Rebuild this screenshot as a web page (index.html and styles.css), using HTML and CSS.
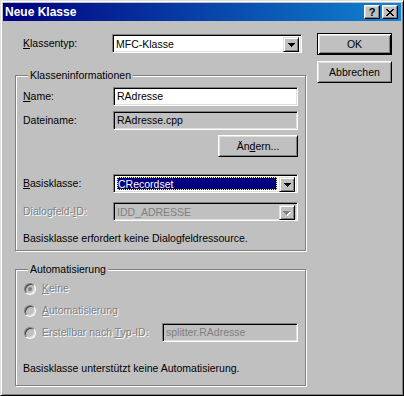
FILE: index.html
```html
<!DOCTYPE html>
<html lang="de">
<head>
  <meta charset="UTF-8" />
  <title>Neue Klasse</title>
  <link rel="stylesheet" href="styles.css">
</head>
<body>
  <div class="window">
    <div class="titlebar">
      <span class="title">Neue Klasse</span>
      <div class="title-buttons">
        <span class="tbtn help">?</span>
        <span class="tbtn close">
          <svg width="8" height="7" viewBox="0 0 8 7" shape-rendering="crispEdges"><path d="M0 0h2v1h1v1h2v-1h1v-1h2v1h-1v1h-1v1h-1v1h1v1h1v1h1v1h-2v-1h-1v-1h-2v1h-1v1h-2v-1h1v-1h1v-1h1v-1h-1v-1h-1v-1h-1z" fill="#000"/></svg>
        </span>
      </div>
    </div>

    <div class="dialog">
      <div class="main">
        <div class="row top-row">
          <label class="lbl"><u>K</u>lassentyp:</label>
          <div class="combo wide">
            <span class="combo-text">MFC-Klasse</span>
            <span class="drop"><svg width="7" height="4" viewBox="0 0 7 4" shape-rendering="crispEdges"><path d="M0 0h7v1h-1v1h-1v1h-1v1h-1v-1h-1v-1h-1v-1h-1z" fill="#000"/></svg></span>
          </div>
        </div>

        <div class="group info">
          <span class="legend">Klasseninformationen</span>

          <div class="row name-row">
            <label class="lbl"><u>N</u>ame:</label>
            <div class="edit">RAdresse</div>
          </div>

          <div class="row file-row">
            <label class="lbl">Dateiname:</label>
            <div class="edit readonly">RAdresse.cpp</div>
          </div>

          <button class="btn change">Än<u>d</u>ern...</button>

          <div class="row base-row">
            <label class="lbl"><u>B</u>asisklasse:</label>
            <div class="combo">
              <span class="combo-text"><span class="selected">CRecordset</span></span>
              <span class="drop"><svg width="7" height="4" viewBox="0 0 7 4" shape-rendering="crispEdges"><path d="M0 0h7v1h-1v1h-1v1h-1v1h-1v-1h-1v-1h-1v-1h-1z" fill="#000"/></svg></span>
            </div>
          </div>

          <div class="row dlg-row">
            <label class="lbl disabled">Dialogfeld-<u>I</u>D:</label>
            <div class="combo off">
              <span class="combo-text">IDD_ADRESSE</span>
              <span class="drop"><svg width="8" height="5" viewBox="0 0 8 5" shape-rendering="crispEdges"><path d="M1 1h7v1h-1v1h-1v1h-1v1h-1v-1h-1v-1h-1v-1h-1z" fill="#fff"/><path d="M0 0h7v1h-1v1h-1v1h-1v1h-1v-1h-1v-1h-1v-1h-1z" fill="#808080"/></svg></span>
            </div>
          </div>

          <p class="note base-note">Basisklasse erfordert keine Dialogfeldressource.</p>
        </div>

        <div class="group auto">
          <span class="legend">Automatisierung</span>

          <div class="radio-row first">
            <span class="radio checked"></span>
            <span class="disabled"><u>K</u>eine</span>
          </div>
          <div class="radio-row second">
            <span class="radio"></span>
            <span class="disabled"><u>A</u>utomatisierung</span>
          </div>
          <div class="radio-row third">
            <span class="radio"></span>
            <span class="disabled">Erstellbar nach <u>T</u>yp-ID:</span>
            <div class="edit readonly off typeid">splitter.RAdresse</div>
          </div>

          <p class="note auto-note">Basisklasse unterstützt keine Automatisierung.</p>
        </div>
      </div>

      <div class="side">
        <button class="btn default">OK</button>
        <button class="btn">Abbrechen</button>
      </div>
    </div>
  </div>
</body>
</html>
```

FILE: styles.css
```css
* {
  box-sizing: border-box;
}
body {
  margin: 0;
  background: #c0c0c0;
  font-family: "Liberation Sans", Arial, sans-serif;
  font-size: 10.5px;
  line-height: 13px;
  color: #000;
}
u {
  text-underline-offset: 1px;
}
.window {
  width: 404px;
  height: 396px;
  padding: 2px;
  background: #c0c0c0;
  border: 1px solid;
  border-color: #dfdfdf #000 #000 #dfdfdf;
  box-shadow: inset 1px 1px #fff, inset -1px -1px #808080;
  display: flex;
  flex-direction: column;
}
.titlebar {
  height: 18px;
  padding: 0 3px 0 2px;
  display: flex;
  align-items: center;
  background: linear-gradient(to right, #000080, #1084d0);
  color: #fff;
}
.title {
  flex: 1;
  font-weight: bold;
  font-size: 12px;
}
.title-buttons {
  display: flex;
  gap: 2px;
}
.tbtn {
  width: 16px;
  height: 14px;
  display: flex;
  align-items: center;
  justify-content: center;
  background: #c0c0c0;
  color: #000;
  border: 1px solid;
  border-color: #fff #000 #000 #fff;
  box-shadow: inset -1px -1px #808080, inset 1px 1px #dfdfdf;
}
.help {
  font-weight: bold;
  font-size: 11px;
  line-height: 11px;
}

.dialog {
  flex: 1;
  display: flex;
  padding: 13px 0 0 12px;
}
.main {
  width: 291px;
  display: flex;
  flex-direction: column;
}
.side {
  margin: -1px 0 0 11px;
  display: flex;
  flex-direction: column;
  gap: 6px;
}

.row {
  display: flex;
  align-items: center;
}
.lbl {
  width: 90px;
  flex-shrink: 0;
}
.top-row {
  padding-left: 8px;
}
.top-row .lbl {
  width: 89px;
}

/* sunken fields */
.edit, .combo {
  height: 19px;
  background: #fff;
  border: 1px solid;
  border-color: #808080 #fff #fff #808080;
  box-shadow: inset 1px 1px #000, inset -1px -1px #dfdfdf;
}
.edit {
  width: 185px;
  padding: 2px 3px;
  white-space: nowrap;
}
.edit.readonly {
  background: #c0c0c0;
}
.edit.off {
  color: #808080;
}
.combo {
  width: 185px;
  display: flex;
  padding: 2px;
}
.combo.wide {
  width: 190px;
}
.combo.off {
  background: #c0c0c0;
  color: #808080;
}
.combo-text {
  flex: 1;
  padding: 1px 1px 0;
  display: flex;
}
.selected {
  flex: 1;
  margin: -1px 1px 0 0;
  padding: 1px 1px 0;
  background: #000080;
  color: #fff;
  outline: 1px dotted #ffff80;
  outline-offset: -1px;
}
.drop {
  width: 16px;
  height: 15px;
  display: flex;
  align-items: center;
  justify-content: center;
  padding-top: 1px;
  background: #c0c0c0;
  border: 1px solid;
  border-color: #dfdfdf #000 #000 #dfdfdf;
  box-shadow: inset 1px 1px #fff, inset -1px -1px #808080;
}

/* push buttons */
.btn {
  width: 75px;
  height: 22px;
  padding: 0;
  font: inherit;
  color: #000;
  background: #c0c0c0;
  border: 1px solid;
  border-color: #fff #000 #000 #fff;
  box-shadow: inset 1px 1px #dfdfdf, inset -1px -1px #808080;
}
.btn.default {
  border-color: #000;
  box-shadow: inset 1px 1px #fff, inset -1px -1px #000, inset 2px 2px #dfdfdf, inset -2px -2px #808080;
}
.btn.change {
  width: 80px;
  height: 22px;
  align-self: flex-end;
  margin-top: 5px;
}

/* etched group boxes */
.group {
  display: flex;
  flex-direction: column;
  padding: 0 7px;
  border: 1px solid #808080;
  box-shadow: inset 1px 1px #fff, 1px 1px #fff;
}
.legend {
  align-self: flex-start;
  margin: -7px 0 0 5px;
  padding: 0 2px;
  background: #c0c0c0;
}
.info {
  margin-top: 22px;
  padding-bottom: 5px;
}
.name-row {
  margin-top: 5px;
}
.file-row {
  margin-top: 5px;
}
.base-row {
  margin-top: 17px;
}
.dlg-row {
  margin-top: 9px;
}
.note {
  margin: 0;
}
.base-note {
  margin-top: 11px;
}

.auto {
  margin-top: 18px;
  padding-bottom: 10px;
}
.radio-row {
  display: flex;
  align-items: center;
  gap: 6px;
  padding-left: 1px;
}
.radio-row.first {
  margin-top: 6px;
}
.radio-row.second {
  margin-top: 9px;
}
.radio-row.third {
  margin-top: 6px;
}
.radio {
  width: 12px;
  height: 12px;
  border-radius: 50%;
  background: #c0c0c0;
  border: 1px solid;
  border-color: #808080 #fff #fff #808080;
  box-shadow: inset 1px 1px #404040, inset -1px -1px #dfdfdf;
  display: flex;
  align-items: center;
  justify-content: center;
}
.radio.checked::after {
  content: "";
  width: 4px;
  height: 4px;
  border-radius: 50%;
  background: #808080;
}
.disabled {
  color: #808080;
  text-shadow: 1px 1px #fff;
}
.typeid {
  width: 136px;
  margin-left: auto;
}
.auto-note {
  margin-top: 20px;
}
```
